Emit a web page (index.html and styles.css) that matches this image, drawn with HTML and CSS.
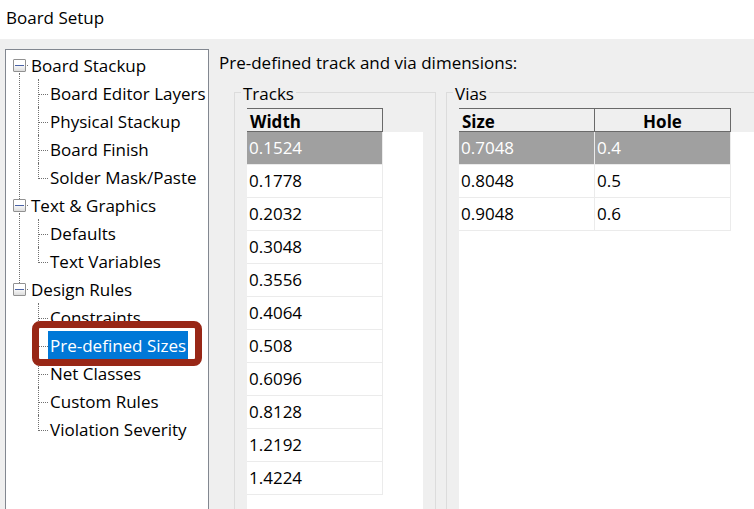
FILE: index.html
```html
<!DOCTYPE html>
<html lang="en">
<head>
    <meta charset="UTF-8">
    <meta name="viewport" content="width=device-width, initial-scale=1.0">
    <title>Board Setup</title>
    <link rel="stylesheet" href="styles.css">
</head>
<body>
    <header class="title-bar">Board Setup</header>

    <div class="dialog">
        <nav class="tree">
            <ul class="tree-root">
                <li class="group">
                    <div class="group-row">
                        <button class="toggle" aria-label="Toggle Board Stackup"></button>
                        <a href="#stackup">Board Stackup</a>
                    </div>
                    <ul class="children">
                        <li><a href="#layers">Board Editor Layers</a></li>
                        <li><a href="#physical">Physical Stackup</a></li>
                        <li><a href="#finish">Board Finish</a></li>
                        <li><a href="#mask">Solder Mask/Paste</a></li>
                    </ul>
                </li>
                <li class="group">
                    <div class="group-row">
                        <button class="toggle" aria-label="Toggle Text &amp; Graphics"></button>
                        <a href="#text">Text &amp; Graphics</a>
                    </div>
                    <ul class="children">
                        <li><a href="#defaults">Defaults</a></li>
                        <li><a href="#variables">Text Variables</a></li>
                    </ul>
                </li>
                <li class="group">
                    <div class="group-row">
                        <button class="toggle" aria-label="Toggle Design Rules"></button>
                        <a href="#rules">Design Rules</a>
                    </div>
                    <ul class="children">
                        <li><a href="#constraints">Constraints</a></li>
                        <li class="marked"><a class="selected" href="#sizes">Pre-defined Sizes</a></li>
                        <li><a href="#netclasses">Net Classes</a></li>
                        <li><a href="#custom">Custom Rules</a></li>
                        <li><a href="#severity">Violation Severity</a></li>
                    </ul>
                </li>
            </ul>
        </nav>

        <main class="page">
            <p class="page-title">Pre-defined track and via dimensions:</p>
            <div class="panels">
                <fieldset class="panel tracks">
                    <legend>Tracks</legend>
                    <div class="grid">
                        <table>
                            <thead>
                                <tr><th>Width</th></tr>
                            </thead>
                            <tbody>
                                <tr class="current"><td>0.1524</td></tr>
                                <tr><td>0.1778</td></tr>
                                <tr><td>0.2032</td></tr>
                                <tr><td>0.3048</td></tr>
                                <tr><td>0.3556</td></tr>
                                <tr><td>0.4064</td></tr>
                                <tr><td>0.508</td></tr>
                                <tr><td>0.6096</td></tr>
                                <tr><td>0.8128</td></tr>
                                <tr><td>1.2192</td></tr>
                                <tr><td>1.4224</td></tr>
                            </tbody>
                        </table>
                    </div>
                </fieldset>
                <fieldset class="panel vias">
                    <legend>Vias</legend>
                    <div class="grid">
                        <table>
                            <thead>
                                <tr><th>Size</th><th class="center">Hole</th></tr>
                            </thead>
                            <tbody>
                                <tr class="current"><td>0.7048</td><td>0.4</td></tr>
                                <tr><td>0.8048</td><td>0.5</td></tr>
                                <tr><td>0.9048</td><td>0.6</td></tr>
                            </tbody>
                        </table>
                    </div>
                </fieldset>
            </div>
        </main>
    </div>

    <script>
        // Collapse and expand the tree groups
        document.querySelectorAll('.toggle').forEach(button => {
            button.addEventListener('click', () => {
                button.closest('.group').classList.toggle('collapsed');
            });
        });
    </script>
</body>
</html>
```
FILE: styles.css
```css
* {
    box-sizing: border-box;
}
body {
    margin: 0;
    height: 100vh;
    display: flex;
    flex-direction: column;
    overflow: hidden;
    background-color: #efefef;
    color: #000;
    font-family: "Open Sans", "Noto Sans", sans-serif;
    font-size: 17px;
    line-height: 24px;
}
.title-bar {
    padding: 6px 6px 9px;
    background-color: #fff;
}
.dialog {
    flex: 1;
    min-height: 0;
    display: flex;
    gap: 10px;
    padding: 10px 0 0 5px;
}

/* Tree */
.tree {
    flex: 0 0 204px;
    padding: 1px 0 0 7px;
    background-color: #fff;
    border: 1px solid #828790;
    border-bottom: none;
}
.tree ul {
    margin: 0;
    padding: 0;
    list-style: none;
}
.tree a {
    padding-top: 2px;
    color: #000;
    text-decoration: none;
    line-height: 26px;
    white-space: nowrap;
}
.group {
    position: relative;
}
.group:not(:last-child)::before {
    content: "";
    position: absolute;
    top: 22px;
    bottom: -8px;
    left: 6px;
    border-left: 1px dotted #707070;
}
.group-row {
    display: flex;
    align-items: center;
    height: 28px;
}
.toggle {
    position: relative;
    width: 13px;
    height: 13px;
    margin-right: 5px;
    padding: 0;
    border: 1px solid #919191;
    border-radius: 1px;
    background: linear-gradient(#fff 40%, #dcdcdc);
}
.toggle::before {
    content: "";
    position: absolute;
    top: 5px;
    left: 1px;
    width: 9px;
    height: 1px;
    background-color: #4b63a7;
}
.toggle::after {
    content: "";
    position: absolute;
    top: 5px;
    left: 13px;
    width: 1px;
    height: 1px;
    background-color: #707070;
}
.collapsed .toggle {
    background: linear-gradient(#4b63a7, #4b63a7) center / 1px 9px no-repeat #fff;
}
.collapsed .children {
    display: none;
}
.children li {
    position: relative;
    display: flex;
    height: 28px;
    padding-left: 35px;
}
.children li::before {
    content: "";
    position: absolute;
    top: 0;
    left: 25px;
    width: 9px;
    height: 15px;
    border-left: 1px dotted #707070;
    border-bottom: 1px dotted #707070;
}
.children li:not(:last-child)::after {
    content: "";
    position: absolute;
    top: 15px;
    bottom: 0;
    left: 25px;
    border-left: 1px dotted #707070;
}
.children a {
    padding: 2px 2px 0;
}
.children .selected {
    background-color: #0078d7;
    color: #fff;
}

/* Red frame round the current page */
.children .marked {
    z-index: 1;
}
.children li.marked:not(:last-child)::after {
    top: -10px;
    bottom: -7px;
    left: 19px;
    width: 170px;
    box-sizing: border-box;
    border: 7px solid #982716;
    border-radius: 8px;
    pointer-events: none;
}

/* Page */
.page {
    flex: 1;
    min-width: 0;
    display: flex;
    flex-direction: column;
}
.page-title {
    margin: 2px 0 5px;
}
.panels {
    flex: 1;
    min-height: 0;
    display: flex;
    gap: 10px;
    padding-left: 15px;
}
.panel {
    display: flex;
    flex-direction: column;
    min-width: 0;
    margin: 0;
    padding: 4px 12px 0;
    border: 1px solid #dcdcdc;
    border-bottom: none;
}
.panel legend {
    margin-left: -6px;
    padding: 4px 2px 0;
    line-height: 20px;
}
.tracks {
    flex: 0 0 202px;
}
.vias {
    flex: 1;
    padding-right: 0;
    border-right: none;
}
.grid {
    flex: 1;
    background: linear-gradient(#efefef 24px, #fff 24px);
}
table {
    border-spacing: 0;
    table-layout: fixed;
}
th {
    width: 136px;
    height: 24px;
    padding: 4px 3px 0;
    border: 1px solid #696969;
    border-left: none;
    line-height: 18px;
    text-align: left;
}
th.center {
    text-align: center;
}
td {
    height: 33px;
    padding: 0 2px;
    border-right: 1px solid #ebebeb;
    border-bottom: 1px solid #ebebeb;
}
.current td {
    background-color: #a0a0a0;
    background-clip: padding-box;
    color: #fff;
}
```
